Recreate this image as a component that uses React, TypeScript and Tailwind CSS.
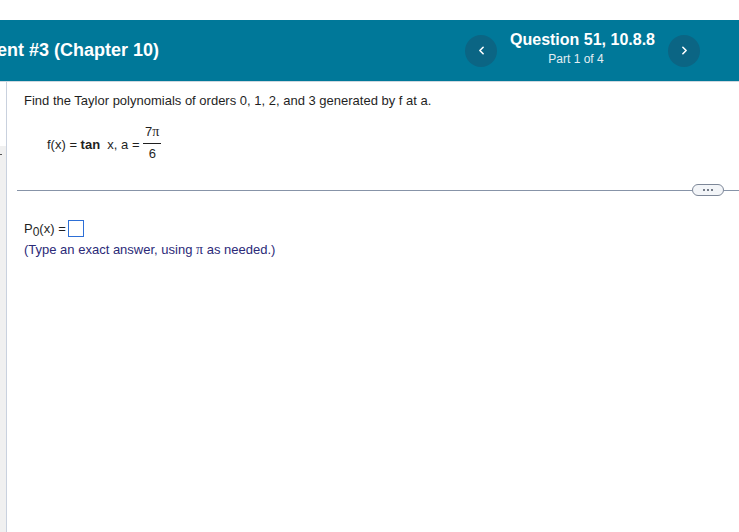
import { ChevronLeft, ChevronRight } from 'lucide-react';

const font = { fontFamily: '"Liberation Sans", Arial, sans-serif' };

function NavButton({ dir }: { dir: 'left' | 'right' }) {
  return (
    <button className="w-[32px] h-[32px] rounded-full bg-[#0b6584] flex items-center justify-center text-white">
      {dir === 'left' ? <ChevronLeft size={13} strokeWidth={3} /> : <ChevronRight size={13} strokeWidth={3} />}
    </button>
  );
}

export default function App() {
  return (
    <div className="w-[739px] h-[532px] bg-white flex flex-col overflow-hidden" style={font}>
      <div className="h-[20px] shrink-0" />

      {/* header band */}
      <div className="h-[62px] shrink-0 bg-[#007899] border-b border-[#cfd8e0] flex items-center">
        <h1 className="ml-[-3px] text-[18px] font-bold text-white whitespace-nowrap">ent #3 (Chapter 10)</h1>
        <div className="ml-auto flex items-center mr-[39px]">
          <NavButton dir="left" />
          <div className="w-[171px] flex flex-col items-center mt-[-4px]">
            <span className="text-[16px] font-bold text-white leading-[20px]">Question 51, 10.8.8</span>
            <span className="text-[12px] text-[#e3eef3] leading-[16px] mt-[1px] mr-[13px]">Part 1 of 4</span>
          </div>
          <NavButton dir="right" />
        </div>
      </div>

      <div className="flex flex-1 min-h-0">
        {/* left rail */}
        <div className="w-[7px] shrink-0 flex flex-col border-r border-[#c9d1de]">
          <div className="h-[64px] bg-white" />
          <div className="flex-1 bg-[#f0f0f0] relative">
            <span className="absolute left-0 top-[8px] w-[2px] h-[1px] bg-[#555]" />
          </div>
        </div>

        {/* question body */}
        <div className="flex-1 pt-[11px] text-[13px] text-[#1f1f1f]">
          <p className="pl-[17px] leading-[16px]">
            Find the Taylor polynomials of orders 0, 1, 2, and 3 generated by f at a.
          </p>

          <div className="pl-[40px] mt-[13px] flex items-center h-[40px]">
            <span className="relative top-[3px]">f(x) =&nbsp;</span>
            <span className="font-bold relative top-[3px]">tan</span>
            <span className="relative top-[3px]">&nbsp; x, a =&nbsp;</span>
            <span className="inline-flex flex-col items-center leading-[15px]">
              <span className="px-[2px] pb-[4px]">
                7<span style={{ fontFamily: '"Liberation Serif", serif' }} className="text-[14px]">π</span>
              </span>
              <span className="border-t border-[#1f1f1f] w-full text-center pt-[2px]">6</span>
            </span>
          </div>

          <div className="mt-[22px] ml-[10px] flex items-center">
            <div className="flex-1 h-[1px] bg-[#8794a8]" />
            <button className="w-[32px] h-[12px] rounded-full border border-[#7d8798] bg-[#f3f5f8] flex items-center justify-center gap-[2px]">
              <span className="w-[2px] h-[2px] bg-[#4a5262] rounded-full" />
              <span className="w-[2px] h-[2px] bg-[#4a5262] rounded-full" />
              <span className="w-[2px] h-[2px] bg-[#4a5262] rounded-full" />
            </button>
            <div className="w-[15px] h-[1px] bg-[#8794a8]" />
          </div>

          <div className="pl-[17px] mt-[23px] flex items-center">
            <span>
              P<sub className="text-[12px] relative top-[3px] align-baseline">0</sub>(x) =
            </span>
            <span className="ml-[2px] w-[16px] h-[17px] border border-[#2d6fd6] bg-white inline-block" />
          </div>
          <p className="pl-[17px] mt-[0px] text-[#2b2a78]">
            (Type an exact answer, using <span style={{ fontFamily: '"Liberation Serif", serif' }} className="text-[14px]">π</span> as needed.)
          </p>
        </div>
      </div>
    </div>
  );
}
